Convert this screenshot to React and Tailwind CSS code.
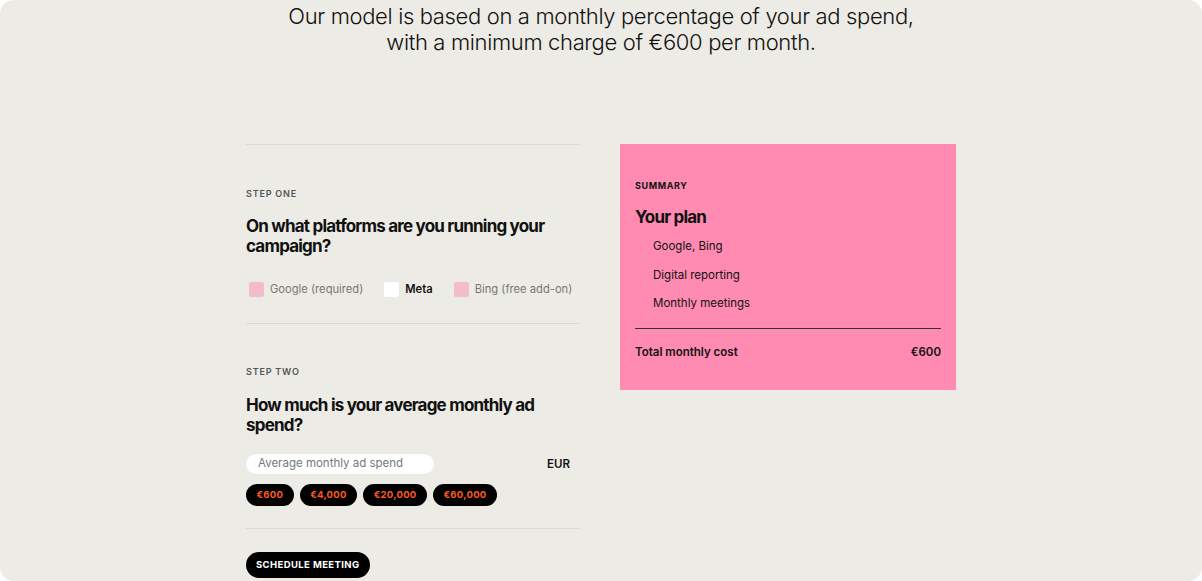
export default function App() {
  const font = { fontFamily: 'Inter, "Liberation Sans", sans-serif' };
  return (
    <div className="w-[1202px] h-[581px] bg-white overflow-hidden" style={font}>
      <div className="w-full h-full bg-[#edebe5] rounded-[14px] flex flex-col items-center">
        <h1 className="mt-[3px] text-[22px] leading-[26px] font-light text-[#111] text-center tracking-[-0.35px]">
          Our model is based on a monthly percentage of your ad spend,
          <br />
          with a minimum charge of €600 per month.
        </h1>
        <div className="mt-[89px] flex gap-[40px]">
          <div className="w-[334px] flex flex-col">
            <div className="border-t border-[#dcd9d2] pt-[43px] pb-[26px] border-b">
              <div className="text-[9px] font-semibold tracking-[0.8px] text-[#555] leading-[12px]">STEP ONE</div>
              <div className="mt-[16px] text-[17px] font-bold leading-[20px] text-[#111] tracking-[-0.8px]">
                On what platforms are you running your campaign?
              </div>
              <div className="mt-[25px] flex items-center text-[11.2px] leading-[16px] pl-[3px] whitespace-nowrap">
                <span className="w-[15px] h-[15px] bg-[#f3bccd] rounded-[2px]" />
                <span className="ml-[6px] text-[#777]">Google (required)</span>
                <span className="ml-[21px] w-[15px] h-[15px] bg-white rounded-[2px]" />
                <span className="ml-[6px] text-[#111] font-semibold">Meta</span>
                <span className="ml-[21px] w-[15px] h-[15px] bg-[#f3bccd] rounded-[2px]" />
                <span className="ml-[6px] text-[#777]">Bing (free add-on)</span>
              </div>
            </div>
            <div className="pt-[42px] pb-[22px] border-b border-[#dcd9d2]">
              <div className="text-[9px] font-semibold tracking-[0.8px] text-[#555] leading-[12px]">STEP TWO</div>
              <div className="mt-[17px] text-[17px] font-bold leading-[20px] text-[#111] tracking-[-0.8px] pr-[20px]">
                How much is your average monthly ad spend?
              </div>
              <div className="mt-[19px] flex items-center">
                <div className="w-[188px] h-[20px] bg-white rounded-full flex items-center pl-[12px] text-[11.5px] text-[#777]">
                  Average monthly ad spend
                </div>
                <div className="ml-[113px] text-[11.5px] font-semibold text-[#111] mt-[2px]">EUR</div>
              </div>
              <div className="mt-[10px] flex gap-[6px]">
                {["€600", "€4,000", "€20,000", "€60,000"].map((v) => (
                  <span key={v} className="h-[22px] px-[10.5px] bg-black rounded-full flex items-center text-[9.5px] font-bold tracking-[0.3px] text-[#ff5a1f]">
                    {v}
                  </span>
                ))}
              </div>
            </div>
            <div className="pt-[21px]">
              <button className="h-[26px] px-[10px] bg-black rounded-full text-white text-[9.5px] font-bold tracking-[0.4px]">
                SCHEDULE MEETING
              </button>
            </div>
          </div>
          <div className="w-[336px] h-[246px] bg-[#ff8bb3] px-[15px] pt-[36px]">
            <div className="text-[9px] font-bold tracking-[0.6px] text-[#111] leading-[12px]">SUMMARY</div>
            <div className="mt-[15px] text-[17px] font-bold leading-[20px] tracking-[-0.8px] text-[#111]">Your plan</div>
            <div className="pl-[18px] mt-[11px] text-[11.5px] text-[#111] leading-[16px] flex flex-col gap-[12.5px]">
              <span>Google, Bing</span>
              <span>Digital reporting</span>
              <span>Monthly meetings</span>
            </div>
            <div className="mt-[17px] border-t border-[#333]" />
            <div className="mt-[15px] flex justify-between text-[11.5px] font-semibold text-[#111] leading-[16px]">
              <span>Total monthly cost</span>
              <span>€600</span>
            </div>
          </div>
        </div>
      </div>
    </div>
  );
}
